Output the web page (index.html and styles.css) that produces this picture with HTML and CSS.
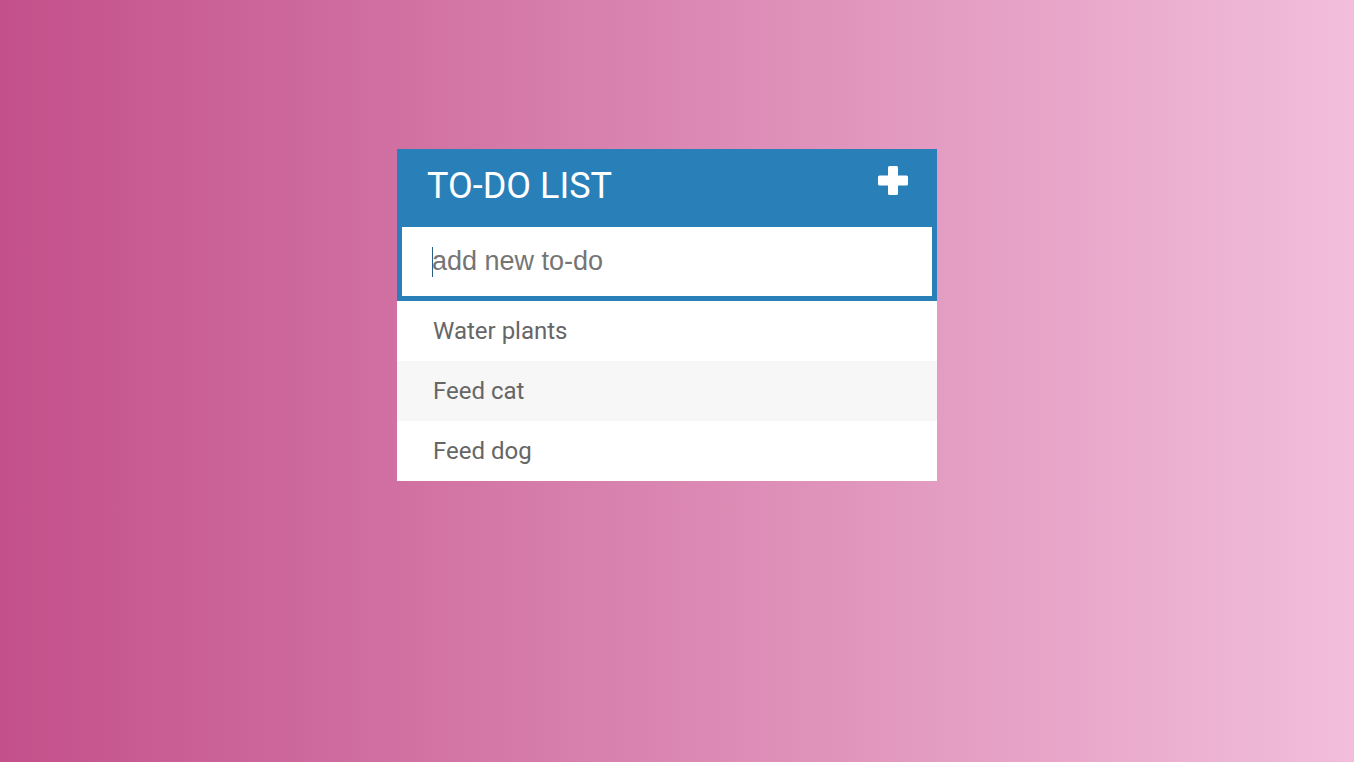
FILE: index.html
```html
<!DOCTYPE html>
<html lang="en">
<head>
<meta charset="utf-8">
<title>To-Do List</title>
<link rel="stylesheet" href="styles.css">
</head>
<body>
<div class="container">
  <div class="header">
    <h1 class="title">To-Do List</h1>
    <svg class="plus" width="30" height="29" viewBox="0 0 30 29" aria-hidden="true">
      <rect x="10" y="0" width="10" height="29" rx="1.5" fill="#fff"/>
      <rect x="0" y="9.5" width="30" height="10" rx="1.5" fill="#fff"/>
    </svg>
  </div>
  <div class="input-wrap">
    <input class="new-todo" type="text" placeholder="add new to-do">
    <span class="caret"></span>
  </div>
  <ul class="list">
    <li class="item">Water plants</li>
    <li class="item">Feed cat</li>
    <li class="item">Feed dog</li>
  </ul>
</div>
</body>
</html>
```
FILE: styles.css
```css
html, body {
  margin: 0;
  padding: 0;
  height: 100%;
}
body {
  background: linear-gradient(to right, #c3508a 0%, #f2bedb 100%);
  font-family: Roboto, "Liberation Sans", sans-serif;
}
.container {
  width: 540px;
  margin: 0 0 0 calc(50% - 280px);
  padding-top: 149px;
}
.header {
  background: #2980b9;
  height: 74px;
  display: flex;
  align-items: flex-start;
  justify-content: space-between;
  padding: 0 29px 0 30px;
}
.title {
  margin: 0;
  color: #fff;
  font-weight: 400;
  font-size: 36px;
  line-height: 74px;
  text-transform: uppercase;
}
.plus {
  margin-top: 17px;
  display: block;
}
.input-wrap {
  position: relative;
}
.new-todo {
  display: block;
  box-sizing: border-box;
  width: 100%;
  height: 78px;
  margin: 0;
  border: 5px solid #2980b9;
  border-top-width: 4px;
  background: #fff;
  padding: 0 0 0 30px;
  font-family: "Liberation Sans", Arial, sans-serif;
  font-size: 27px;
  color: #2980b9;
  outline: none;
}
.new-todo::placeholder {
  color: #757575;
}
.caret {
  position: absolute;
  left: 35px;
  top: 24px;
  width: 1px;
  height: 30px;
  background: #2a5f86;
}
.list {
  list-style: none;
  margin: 0;
  padding: 0;
}
.item {
  height: 60px;
  line-height: 60px;
  padding-left: 36px;
  font-size: 24px;
  color: #666;
  background: #fff;
}
.item:nth-child(2n) {
  background: #f7f7f7;
}
```
